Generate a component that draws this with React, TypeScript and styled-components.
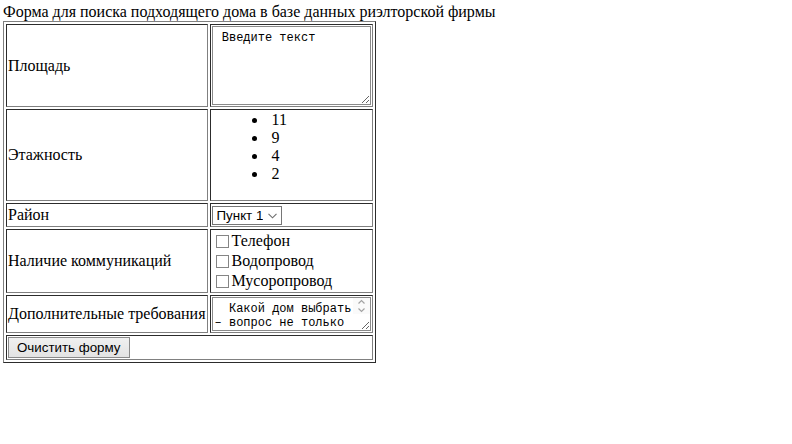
import React from "react";
import styled, { createGlobalStyle } from "styled-components";

const GlobalStyle = createGlobalStyle`
  html, body { background: #fff; }
  body {
    margin: 3px;
    font-family: "Liberation Serif", "Times New Roman", serif;
    font-size: 16px;
    color: #000;
  }
`;

const Title = styled.div`
  line-height: normal;
`;

const FormTable = styled.table`
  border: 1px outset grey;
  border-collapse: separate;
  border-spacing: 2px;
`;

const Cell = styled.td`
  border: 1px inset grey;
  padding: 1px;
  vertical-align: middle;
  white-space: nowrap;
`;

const Note = styled.textarea<{ $h: number; $pr: number }>`
  display: block;
  box-sizing: border-box;
  width: 159px;
  height: ${(p) => p.$h}px;
  margin: 0;
  padding: 4px ${(p) => p.$pr}px 2px 2px;
  border: 1px solid #8a8a8a;
  border-radius: 0;
  font-family: "Liberation Mono", "Courier New", monospace;
  font-size: 12px;
  line-height: 14px;
  color: #000;
  background: #fff;
  overflow: hidden;
  resize: both;
  white-space: pre-wrap;
  outline: none;
`;

const NoteWrap = styled.div`
  position: relative;
  width: 159px;
`;

const ScrollBar = styled.svg`
  position: absolute;
  top: 1px;
  right: 1px;
  pointer-events: none;
`;

const Floors = styled.ul`
  list-style: none;
  margin: 0 0 16px;
  padding: 0 0 0 40px;
`;

const Floor = styled.li`
  line-height: normal;
`;

const Dot = styled.span`
  display: inline-block;
  width: 5px;
  height: 5px;
  border-radius: 50%;
  background: #000;
  margin-right: 15px;
  vertical-align: 2px;
`;

const SelectWrap = styled.span`
  position: relative;
  display: inline-block;
  vertical-align: middle;
`;

const Select = styled.select`
  appearance: none;
  -webkit-appearance: none;
  box-sizing: border-box;
  display: block;
  width: 70px;
  height: 19px;
  margin: 0;
  padding: 0 18px 0 4px;
  border: 1px solid #767676;
  border-radius: 0;
  background: #fff;
  color: #000;
  font-family: "Liberation Sans", Arial, sans-serif;
  font-size: 13.33px;
  outline: none;
`;

const Chevron = styled.svg`
  position: absolute;
  right: 5px;
  top: 7px;
  pointer-events: none;
`;

const CheckLine = styled.label`
  display: flex;
  align-items: center;
  height: 20px;
  padding-top: 1px;
  box-sizing: border-box;
`;

const Check = styled.input`
  appearance: none;
  -webkit-appearance: none;
  box-sizing: border-box;
  width: 13px;
  height: 13px;
  margin: 0 3px 0 4px;
  border: 1px solid #858585;
  border-radius: 0;
  background: #fff;
  flex: none;
`;

const ClearButton = styled.button`
  box-sizing: border-box;
  height: 21px;
  margin: 0;
  padding: 0 8px;
  border: 1px solid #8a8a8a;
  border-radius: 0;
  background: linear-gradient(#f0f0f0, #e3e3e3);
  color: #000;
  font-family: "Liberation Sans", Arial, sans-serif;
  font-size: 13.33px;
  display: block;
`;

const floors = ["11", "9", "4", "2"];
const comms = ["Телефон", "Водопровод", "Мусоропровод"];

export default function App() {
  return (
    <>
      <GlobalStyle />
      <Title>Форма для поиска подходящего дома в базе данных риэлторской фирмы</Title>
      <FormTable>
        <tbody>
          <tr>
            <Cell>Площадь</Cell>
            <Cell>
              <Note $h={79} $pr={2} defaultValue=" Введите текст" />
            </Cell>
          </tr>
          <tr>
            <Cell>Этажность</Cell>
            <Cell>
              <Floors>
                {floors.map((f) => (
                  <Floor key={f}>
                    <Dot />
                    {f}
                  </Floor>
                ))}
              </Floors>
            </Cell>
          </tr>
          <tr>
            <Cell>Район</Cell>
            <Cell>
              <SelectWrap>
                <Select defaultValue="1">
                  <option value="1">Пункт 1</option>
                  <option value="2">Пункт 2</option>
                  <option value="3">Пункт 3</option>
                </Select>
                <Chevron width="9" height="6" viewBox="0 0 9 6">
                  <path d="M0.5 0.8 L4.5 4.8 L8.5 0.8" fill="none" stroke="#6e6e6e" strokeWidth="1.1" />
                </Chevron>
              </SelectWrap>
            </Cell>
          </tr>
          <tr>
            <Cell>Наличие коммуникаций</Cell>
            <Cell>
              {comms.map((c) => (
                <CheckLine key={c}>
                  <Check type="checkbox" />
                  {c}
                </CheckLine>
              ))}
            </Cell>
          </tr>
          <tr>
            <Cell>Дополнительные требования</Cell>
            <Cell>
              <NoteWrap>
                <Note
                  $h={34}
                  $pr={18}
                  defaultValue="  Какой дом выбрать – вопрос не только вкуса, но и возможностей."
                />
                <ScrollBar width="17" height="16" viewBox="0 0 17 16">
                  <rect x="0" y="0" width="17" height="16" fill="#fafafa" />
                  <path d="M5.5 5.5 L8.5 2.5 L11.5 5.5" fill="none" stroke="#a3a3a3" strokeWidth="1.2" />
                  <path d="M5.5 10.5 L8.5 13.5 L11.5 10.5" fill="none" stroke="#a3a3a3" strokeWidth="1.2" />
                </ScrollBar>
              </NoteWrap>
            </Cell>
          </tr>
          <tr>
            <Cell colSpan={2}>
              <ClearButton type="reset">Очистить форму</ClearButton>
            </Cell>
          </tr>
        </tbody>
      </FormTable>
    </>
  );
}
